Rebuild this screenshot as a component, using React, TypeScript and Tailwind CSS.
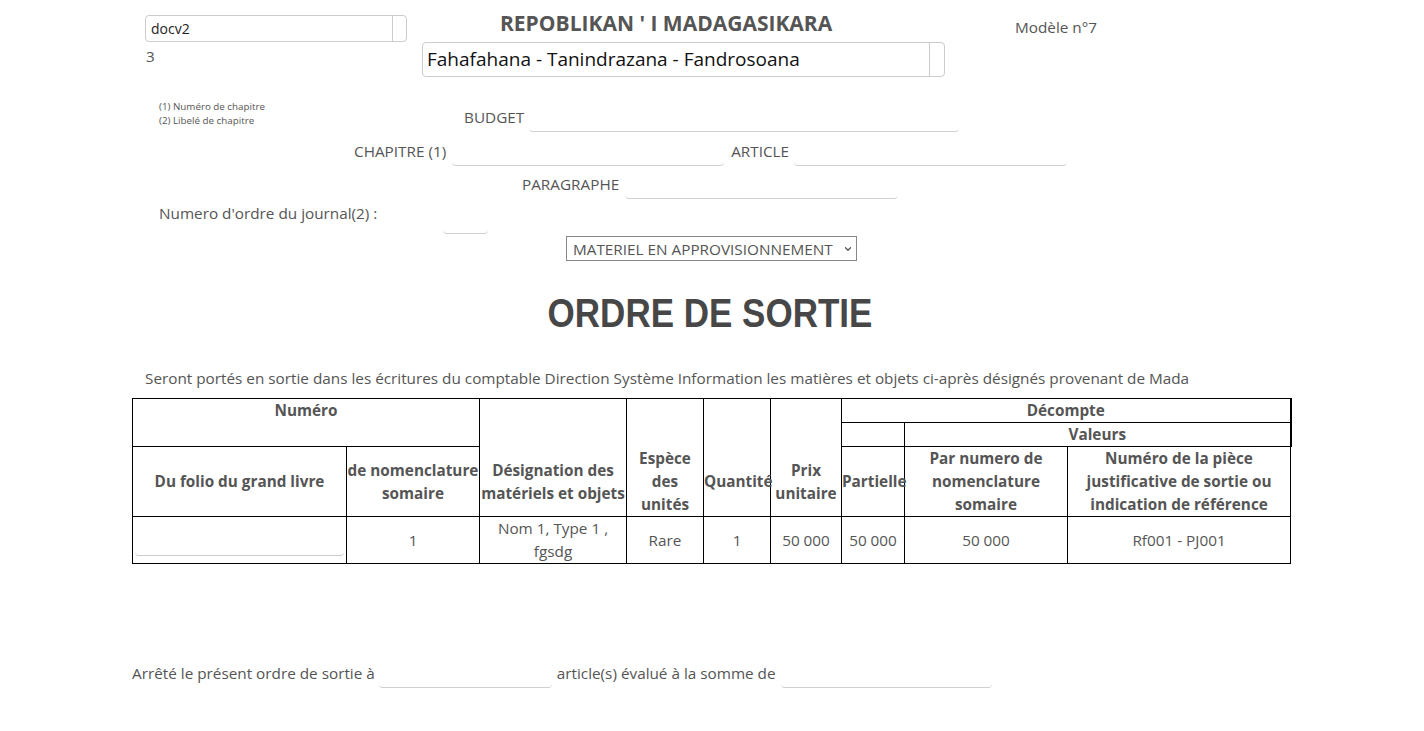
import { ChevronDown } from 'lucide-react';

function Line({ w }: { w: string }) {
  return <div className={`${w} h-[27px] border-b border-[#d0d0d0] rounded-[4px] shrink-0`} />;
}

export default function App() {
  const th = 'border border-black font-bold text-center p-0 leading-[23px]';
  const td = 'border border-black text-center p-0 leading-[23px] font-normal';

  return (
    <div className="w-[1424px] min-h-[731px] bg-white text-[#555] font-['Open_Sans',sans-serif] text-[15.3px]">
      {/* header */}
      <div className="flex pt-[15px]">
        <div className="ml-[145px] w-[262px]">
          <div className="flex h-[27px] border border-[#ccc] rounded-[4px] text-[14px] text-[#222]">
            <div className="flex-1 px-[5px] leading-[25px]">docv2</div>
            <div className="w-[14px] border-l border-[#ccc]" />
          </div>
          <div className="mt-[4px] ml-[1px] leading-[20px]">3</div>
        </div>
        <div className="ml-[15px] w-[523px] -mt-[8px]">
          <div className="ml-[78px] mb-[3px] text-[21px] font-bold leading-[32px] text-[#555]">REPOBLIKAN ' I MADAGASIKARA</div>
          <div className="flex h-[35px] border border-[#ccc] rounded-[4px] text-[19px] text-[#111]">
            <div className="flex-1 px-[4px] leading-[33px]">Fahafahana - Tanindrazana - Fandrosoana</div>
            <div className="w-[15px] border-l border-[#ccc]" />
          </div>
        </div>
        <div className="ml-[70px] mt-[2px] leading-[20px]">Modèle n°7</div>
      </div>

      {/* budget */}
      <div className="flex items-start mt-[22px]">
        <div className="ml-[159px] w-[150px] text-[9.8px] leading-[14px] pt-[1px]">
          <div>(1) Numéro de chapitre</div>
          <div>(2) Libelé de chapitre</div>
        </div>
        <div className="ml-[155px] flex items-end mt-[6px]">
          <span className="mr-[5px] mb-[5px] leading-[20px]">BUDGET</span>
          <Line w="w-[430px]" />
        </div>
      </div>

      <div className="flex items-end mt-[7px] ml-[354px]">
        <span className="mr-[6px] mb-[5px] leading-[20px]">CHAPITRE (1)</span>
        <Line w="w-[272px]" />
        <span className="ml-[7px] mr-[5px] mb-[5px] leading-[20px]">ARTICLE</span>
        <Line w="w-[273px]" />
      </div>

      <div className="flex items-end mt-[6px] ml-[522px]">
        <span className="mr-[6px] mb-[5px] leading-[20px]">PARAGRAPHE</span>
        <Line w="w-[273px]" />
      </div>

      <div className="flex items-start mt-[3px] ml-[159px]">
        <span className="leading-[22px]">Numero d'ordre du journal(2) :</span>
        <div className="ml-[66px] mt-[5px]">
          <Line w="w-[45px]" />
        </div>
      </div>

      <div className="flex justify-start ml-[566px] mt-[2px]">
        <div className="flex items-center w-[291px] h-[25px] border border-[#888] pl-[6px] pr-[3px] leading-[20px]">
          <span className="flex-1">MATERIEL EN APPROVISIONNEMENT</span>
          <ChevronDown className="w-[10px] h-[10px]" strokeWidth={3} />
        </div>
      </div>

      <div className="flex justify-center mt-[30px]">
        <div className="ml-[-4px] font-['Liberation_Sans',Arial,sans-serif] font-bold text-[35px] leading-[44px] text-[#474747] scale-y-[1.17]">
          ORDRE DE SORTIE
        </div>
      </div>

      <div className="ml-[145px] mt-[32px] leading-[22px]">
        Seront portés en sortie dans les écritures du comptable Direction Système Information les matières et objets ci-après désignés provenant de Mada
      </div>

      {/* table */}
      <table className="ml-[132px] mt-[9px] border-collapse w-[1158px] table-fixed">
        <colgroup>
          <col className="w-[214px]" />
          <col className="w-[133px]" />
          <col className="w-[147px]" />
          <col className="w-[77px]" />
          <col className="w-[67px]" />
          <col className="w-[71px]" />
          <col className="w-[63px]" />
          <col className="w-[163px]" />
          <col className="w-[223px]" />
        </colgroup>
        <thead>
          <tr className="h-[24px]">
            <th colSpan={2} rowSpan={2} className={`${th} align-top`}>Numéro</th>
            <th rowSpan={3} className={`${th} align-bottom`}>
              <div className="h-[69px] flex flex-col justify-center">Désignation des matériels et objets</div>
            </th>
            <th rowSpan={3} className={`${th} align-bottom`}>
              <div className="h-[69px] flex flex-col justify-center">Espèce des unités</div>
            </th>
            <th rowSpan={3} className={`${th} align-bottom`}>
              <div className="h-[69px] flex flex-col justify-center">Quantité</div>
            </th>
            <th rowSpan={3} className={`${th} align-bottom`}>
              <div className="h-[69px] flex flex-col justify-center">Prix unitaire</div>
            </th>
            <th colSpan={3} className={`${th} border-r-2`}>Décompte</th>
          </tr>
          <tr className="h-[24px]">
            <th className={th}></th>
            <th colSpan={2} className={`${th} border-r-2`}>Valeurs</th>
          </tr>
          <tr className="h-[70px]">
            <th className={th}>Du folio du grand livre</th>
            <th className={th}>de nomenclature somaire</th>
            <th className={th}>Partielle</th>
            <th className={th}>Par numero de nomenclature somaire</th>
            <th className={th}>Numéro de la pièce justificative de sortie ou indication de référence</th>
          </tr>
        </thead>
        <tbody>
          <tr className="h-[47px]">
            <td className={`${td} align-bottom`}>
              <div className="mx-[2px] mb-[7px] h-[20px] border-b border-[#ccc] rounded-[4px]" />
            </td>
            <td className={td}>1</td>
            <td className={td}>Nom 1, Type 1 , fgsdg</td>
            <td className={td}>Rare</td>
            <td className={td}>1</td>
            <td className={td}>50 000</td>
            <td className={td}>50 000</td>
            <td className={td}>50 000</td>
            <td className={td}>Rf001 - PJ001</td>
          </tr>
        </tbody>
      </table>

      <div className="flex items-end ml-[132px] mt-[97px]">
        <span className="mr-[4px] mb-[5px] leading-[20px]">Arrêté le présent ordre de sortie à</span>
        <Line w="w-[173px]" />
        <span className="ml-[5px] mr-[5px] mb-[5px] leading-[20px]">article(s) évalué à la somme de</span>
        <Line w="w-[211px]" />
      </div>
    </div>
  );
}
